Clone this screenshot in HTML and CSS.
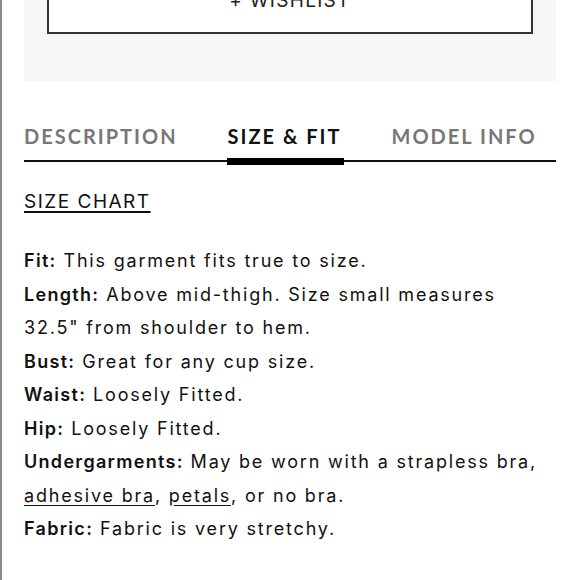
FILE: index.html
```html
<!DOCTYPE html>
<html>
<head>
<meta charset="utf-8">
<link rel="stylesheet" href="styles.css">
</head>
<body>
<div class="frame">
  <div class="panel">
    <div class="wish-btn"><span class="wish-text">+ WISHLIST</span></div>
  </div>
  <div class="tabs">
    <div class="tab">DESCRIPTION</div>
    <div class="tab active">SIZE &amp; FIT</div>
    <div class="tab">MODEL INFO</div>
  </div>
  <div class="content">
    <a class="chart">SIZE CHART</a>
    <div class="specs">
      <p><b>Fit:</b> This garment fits true to size.</p>
      <p><b>Length:</b> Above mid-thigh. Size small measures 32.5" from shoulder to hem.</p>
      <p><b>Bust:</b> Great for any cup size.</p>
      <p><b>Waist:</b> Loosely Fitted.</p>
      <p><b>Hip:</b> Loosely Fitted.</p>
      <p><b>Undergarments:</b> May be worn with a strapless bra, <u>adhesive bra</u>, <u>petals</u>, or no bra.</p>
      <p><b>Fabric:</b> Fabric is very stretchy.</p>
    </div>
  </div>
</div>
</body>
</html>
```
FILE: styles.css
```css
html, body {
  margin: 0;
  padding: 0;
  background: #fff;
}
body {
  font-family: "Lato", "Liberation Sans", sans-serif;
  color: #111;
  width: 580px;
  height: 580px;
  overflow: hidden;
}
.frame {
  border-left: 2px solid #8a8a8a;
  height: 580px;
  padding: 0 24px 0 22px;
  box-sizing: border-box;
}
.panel {
  background: #f6f6f6;
  height: 81px;
  padding: 0 23px;
  box-sizing: border-box;
}
.wish-btn {
  height: 34px;
  border: 2px solid #333;
  border-top: none;
  background: #fff;
  display: flex;
  justify-content: center;
  align-items: flex-end;
  overflow: hidden;
  box-sizing: border-box;
}
.wish-text {
  font-family: "Inter", sans-serif;
  font-size: 19px;
  letter-spacing: 1.3px;
  line-height: 20px;
  margin-bottom: 21px;
  color: #222;
}
.tabs {
  display: flex;
  gap: 50px;
  margin-top: 39px;
  border-bottom: 2px solid #111;
  height: 40px;
  box-sizing: content-box;
}
.tab {
  font-size: 20px;
  font-weight: 700;
  letter-spacing: 2px;
  color: #777;
  line-height: 32px;
  position: relative;
}
.tab.active {
  color: #111;
}
.tab.active::after {
  content: "";
  position: absolute;
  left: -1px;
  right: -2px;
  bottom: -5px;
  height: 7px;
  background: #000;
}
.content {
  padding-top: 28px;
}
.chart {
  display: inline-block;
  font-family: "Inter", sans-serif;
  font-size: 19px;
  letter-spacing: 1.5px;
  text-decoration: underline;
  text-decoration-thickness: 1.5px;
  text-underline-offset: 3px;
  color: #111;
  line-height: 24px;
}
.specs {
  margin-top: 30px;
  font-family: "Inter", sans-serif;
  font-size: 18px;
  line-height: 33.5px;
  letter-spacing: 1.8px;
  width: 518px;
}
.specs p {
  margin: 0;
}
.specs b {
  font-weight: 600;
  letter-spacing: 1.3px;
}
.specs u {
  text-underline-offset: 3px;
}
```
